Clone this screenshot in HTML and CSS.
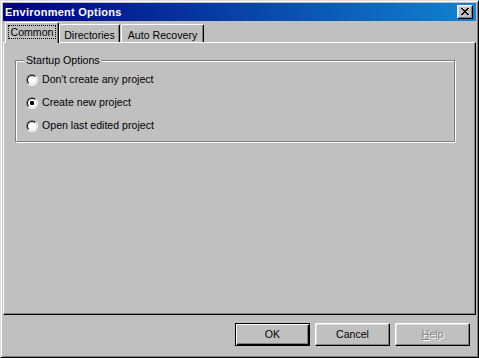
FILE: index.html
```html
<!DOCTYPE html>
<html>
<head>
<meta charset="utf-8">
<link rel="stylesheet" href="styles.css">
</head>
<body>
<div class="window">
  <div class="titlebar">
    <span class="title">Environment Options</span>
    <span class="close">
      <svg width="8" height="7" viewBox="0 0 8 7" shape-rendering="crispEdges">
        <path d="M0 0h2v1h-2zM6 0h2v1h-2zM1 1h2v1h-2zM5 1h2v1h-2zM2 2h4v1h-4zM3 3h2v1h-2zM2 4h4v1h-4zM1 5h2v1h-2zM5 5h2v1h-2zM0 6h2v1h-2zM6 6h2v1h-2z" fill="#000"/>
      </svg>
    </span>
  </div>
  <div class="tabs">
    <div class="tab selected"><span class="focus">Common</span></div>
    <div class="tab t-dir">Directories</div>
    <div class="tab t-auto">Auto Recovery</div>
  </div>
  <div class="panel">
    <div class="group">
      <span class="legend">Startup Options</span>
      <div class="row"><span class="radio"><span class="radio-in"></span></span><span>Don't create any project</span></div>
      <div class="row"><span class="radio"><span class="radio-in"><span class="dot"></span></span></span><span>Create new project</span></div>
      <div class="row"><span class="radio"><span class="radio-in"></span></span><span>Open last edited project</span></div>
    </div>
  </div>
  <div class="footer">
    <div class="btn default"><span class="btn-in">OK</span></div>
    <div class="btn"><span class="btn-in">Cancel</span></div>
    <div class="btn disabled"><span class="btn-in"><u>H</u>elp</span></div>
  </div>
</div>
</body>
</html>
```

FILE: styles.css
```css
html, body {
  margin: 0;
  padding: 0;
  background: #c0c0c0;
}

.window {
  width: 479px;
  height: 358px;
  box-sizing: border-box;
  background: #c0c0c0;
  border: 1px solid;
  border-color: #dfdfdf #000 #000 #dfdfdf;
  box-shadow: inset 1px 1px #fff, inset -1px -1px #808080;
  padding: 2px;
  display: flex;
  flex-direction: column;
  font-family: "Liberation Sans", Arial, sans-serif;
  font-size: 10.6px;
  color: #000;
}

.titlebar {
  height: 18px;
  flex: none;
  display: flex;
  align-items: center;
  justify-content: space-between;
  padding: 0 3px 0 2px;
  background: linear-gradient(to right, #000080, #1084d0);
  color: #fff;
  font-weight: bold;
  font-size: 11px;
  line-height: 13px;
}

.title {
  letter-spacing: 0.25px;
}

.close {
  width: 16px;
  height: 14px;
  box-sizing: border-box;
  background: #c0c0c0;
  border: 1px solid;
  border-color: #fff #000 #000 #fff;
  box-shadow: inset -1px -1px #808080, inset 1px 1px #dfdfdf;
  display: flex;
  align-items: center;
  justify-content: center;
  padding: 0 1px 1px 0;
}

.close svg {
  display: block;
}

.tabs {
  flex: none;
  height: 20px;
  margin-top: 1px;
  padding-left: 2px;
  display: flex;
  align-items: flex-end;
}

.tab {
  box-sizing: border-box;
  height: 18px;
  border: 1px solid;
  border-bottom: none;
  border-color: #fff #000 transparent #fff;
  border-top-left-radius: 2px;
  border-top-right-radius: 2px;
  box-shadow: inset -1px 0 #808080;
  display: flex;
  justify-content: center;
  padding-top: 4px;
  line-height: 13px;
  background: #c0c0c0;
}

.tab.selected {
  position: relative;
  z-index: 1;
  width: 54px;
  height: 21px;
  margin-bottom: -1px;
  padding-top: 2px;
}

.t-dir {
  width: 61px;
  margin-right: 1px;
}

.t-auto {
  width: 83px;
}

.focus {
  display: block;
  height: 14px;
  padding: 0 2px;
  box-sizing: border-box;
  border: 1px dotted #000;
  line-height: 12px;
  white-space: nowrap;
}

.panel {
  flex: none;
  height: 273px;
  box-sizing: border-box;
  border: 1px solid;
  border-color: #fff #000 #000 #fff;
  box-shadow: inset -1px -1px #808080;
  padding: 17px 20px 0 11px;
}

.group {
  position: relative;
  border: 1px solid #808080;
  box-shadow: 1px 1px 0 #fff, inset 1px 1px 0 #fff;
  padding: 7px 0 4px 10px;
}

.legend {
  position: absolute;
  left: 8px;
  top: -7px;
  padding: 0 2px;
  background: #c0c0c0;
  line-height: 13px;
}

.row {
  height: 23px;
  display: flex;
  align-items: center;
  gap: 4px;
  line-height: 13px;
}

.radio {
  width: 12px;
  height: 12px;
  box-sizing: border-box;
  border-radius: 50%;
  border: 1px solid;
  border-color: #808080 #fff #fff #808080;
  display: flex;
}

.radio-in {
  flex: 1;
  border-radius: 50%;
  border: 1px solid;
  border-color: #000 #dfdfdf #dfdfdf #000;
  background: #fff;
  display: flex;
  align-items: center;
  justify-content: center;
}

.dot {
  width: 4px;
  height: 4px;
  border-radius: 1px;
  background: #000;
}

.footer {
  flex: 1;
  display: flex;
  justify-content: flex-end;
  align-items: flex-start;
  gap: 5px;
  padding: 8px 6px 0 0;
}

.btn {
  width: 75px;
  height: 23px;
  box-sizing: border-box;
  border: 1px solid;
  border-color: #fff #000 #000 #fff;
  box-shadow: inset -1px -1px #808080, inset 1px 1px #dfdfdf;
  display: flex;
}

.btn.default {
  border-color: #000;
  box-shadow: inset 1px 1px #fff, inset -1px -1px #000, inset -2px -2px #808080;
}

.btn-in {
  flex: 1;
  display: flex;
  align-items: center;
  justify-content: center;
  line-height: 13px;
}

.btn.disabled .btn-in {
  color: #808080;
  text-shadow: 1px 1px 0 #fff;
}
```
